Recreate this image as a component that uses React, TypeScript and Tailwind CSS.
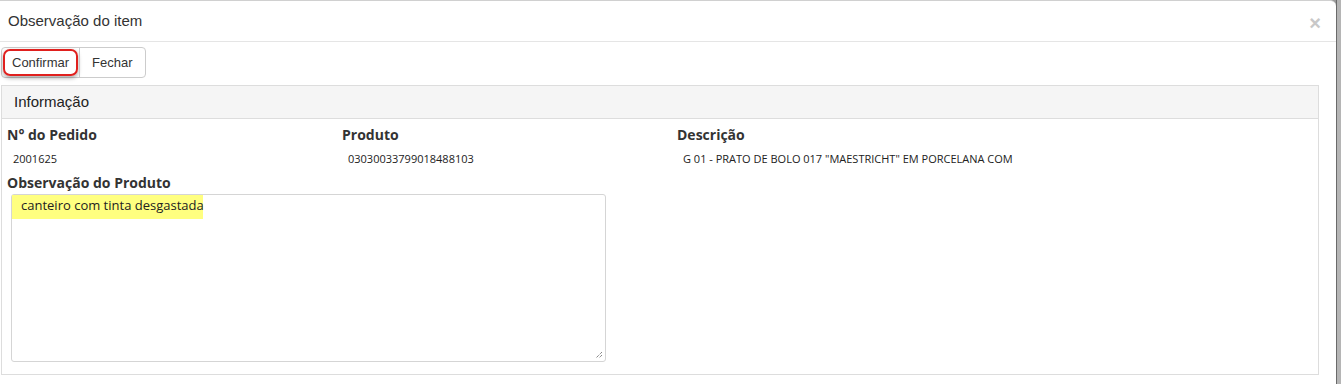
import React from "react";

export default function App() {
  return (
    <div className="w-[1341px] h-[384px] bg-[#9a9a9a] flex overflow-hidden" style={{ fontFamily: "Arial, 'Liberation Sans', sans-serif" }}>
      <div className="w-[1336px] h-[384px] bg-white rounded-tr-[6px] border-t border-[#d0d0d0] flex flex-col">
        {/* header */}
        <div className="h-[41px] shrink-0 border-b border-[#e5e5e5] flex items-center justify-between pl-[8px] pr-[15px]">
          <span className="text-[15px] text-[#333] font-['Liberation_Sans',Arial,sans-serif]">Observação do item</span>
          <span className="text-[20px] leading-none font-bold text-[#c8c8c8] mt-[4px]">×</span>
        </div>
        {/* buttons */}
        <div className="h-[43px] shrink-0 pt-[5px] pl-[1px]">
          <div className="inline-flex border border-[#ccc] rounded-[4px] h-[31px] font-['Liberation_Sans',Arial,sans-serif] text-[13px] text-[#333]">
            <button className="px-[1px] h-full flex items-center">
              <span className="px-[7px] h-[27px] flex items-center border-2 border-[#e0201e] rounded-[7px] shadow-[0_2px_4px_rgba(0,0,0,0.35)]">Confirmar</span>
            </button>
            <button className="px-[12px] h-full border-l border-[#ccc]">Fechar</button>
          </div>
        </div>
        {/* panel */}
        <div className="ml-[1px] w-[1318px] h-[290px] shrink-0 border border-[#ddd] flex flex-col overflow-hidden">
          <div className="h-[33px] shrink-0 bg-[#f5f5f5] border-b border-[#ddd] flex items-center pl-[12px] text-[15px] text-[#222] font-['Liberation_Sans',Arial,sans-serif]">
            Informação
          </div>
          <div className="pl-[5px] pt-[6px] font-['Open_Sans','Noto_Sans',sans-serif]">
            <div className="flex">
              <div className="w-[335px]">
                <div className="text-[14px] font-bold text-[#333] leading-[19px]">N° do Pedido</div>
                <div className="text-[11px] text-[#222] pl-[6px] mt-[7px] leading-[16px]">2001625</div>
              </div>
              <div className="w-[335px]">
                <div className="text-[14px] font-bold text-[#333] leading-[19px]">Produto</div>
                <div className="text-[11px] text-[#222] pl-[6px] mt-[7px] leading-[16px]">03030033799018488103</div>
              </div>
              <div className="w-[335px]">
                <div className="text-[14px] font-bold text-[#333] leading-[19px]">Descrição</div>
                <div className="text-[11px] text-[#222] pl-[6px] mt-[7px] leading-[16px] whitespace-nowrap">G 01 - PRATO DE BOLO 017 "MAESTRICHT" EM PORCELANA COM</div>
              </div>
            </div>
            <div className="text-[14px] font-bold text-[#333] leading-[19px] mt-[6px]">Observação do Produto</div>
            <div className="ml-[4px] mt-[2px] w-[595px] h-[168px] border border-[#d5d5d5] rounded-[3px] relative">
              <div className="w-[191px] h-[24px] bg-[#ffff80] pl-[9px] text-[13px] text-[#222] leading-[20px] whitespace-nowrap">canteiro com tinta desgastada</div>
              <svg className="absolute right-[2px] bottom-[2px]" width="8" height="8" viewBox="0 0 8 8">
                <path d="M7 1 L1 7 M7 4 L4 7" stroke="#555" strokeWidth="1" strokeDasharray="1 1" />
              </svg>
            </div>
          </div>
        </div>
      </div>
      <div className="w-[1px] bg-[#6a6a6a]" />
      <div className="flex-1 bg-[#b5b5b5]" />
    </div>
  );
}
